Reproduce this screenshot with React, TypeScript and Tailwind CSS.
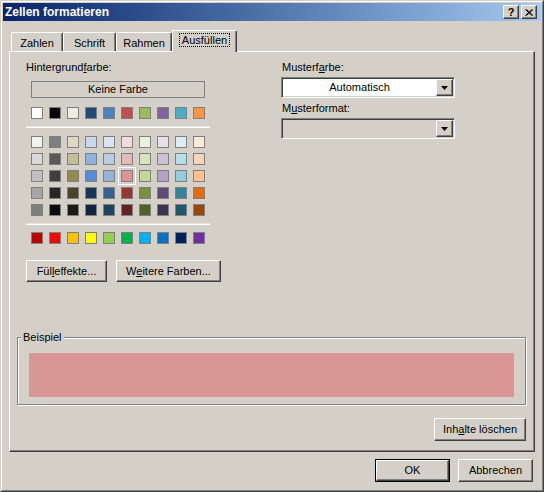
import React from "react";

const theme = ["#FFFFFF", "#000000", "#EEECE1", "#1F497D", "#4F81BD", "#C0504D", "#9BBB59", "#8064A2", "#4BACC6", "#F79646"];

const tints = [
  ["#F2F2F2", "#7F7F7F", "#DDD9C3", "#C6D9F0", "#DBE5F1", "#F2DCDB", "#EBF1DD", "#E5E0EC", "#DBEEF3", "#FDEADA"],
  ["#D8D8D8", "#595959", "#C4BD97", "#8DB3E2", "#B8CCE4", "#E5B9B7", "#D7E3BC", "#CCC1D9", "#B7DDE8", "#FBD5B5"],
  ["#BFBFBF", "#3F3F3F", "#938953", "#548DD4", "#95B3D7", "#D99694", "#C3D69B", "#B2A2C7", "#92CDDC", "#FAC08F"],
  ["#A5A5A5", "#262626", "#494429", "#17365D", "#366092", "#953734", "#76923C", "#5F497A", "#31859B", "#E36C09"],
  ["#7F7F7F", "#0C0C0C", "#1D1B10", "#0F243E", "#244061", "#632423", "#4F6128", "#3F3151", "#205867", "#974806"],
];

const standard = ["#C00000", "#FF0000", "#FFC000", "#FFFF00", "#92D050", "#00B050", "#00B0F0", "#0070C0", "#002060", "#7030A0"];

// windows classic 3d edges
const raised =
  "border border-t-white border-l-white border-r-[#404040] border-b-[#404040] shadow-[inset_-1px_-1px_0_#808080] bg-[#d4d0c8]";
const sunken =
  "border border-t-[#808080] border-l-[#808080] border-r-white border-b-white shadow-[inset_1px_1px_0_#404040,inset_-1px_-1px_0_#d4d0c8]";

function Swatch({ color, selected }: { color: string; selected?: boolean }) {
  return (
    <div
      className={`w-[12px] h-[12px] shrink-0 border border-[#808080] ${
        selected ? "outline outline-1 outline-white outline-offset-2" : ""
      }`}
      style={{ backgroundColor: color }}
    />
  );
}

function SwatchRow({ colors, selected }: { colors: string[]; selected?: number }) {
  return (
    <div className="flex gap-[6px] ml-[5px]">
      {colors.map((c, i) => (
        <Swatch key={i} color={c} selected={i === selected} />
      ))}
    </div>
  );
}

function Arrow() {
  return (
    <svg width="7" height="4" viewBox="0 0 7 4">
      <polygon points="0,0 7,0 3.5,4" fill="#000" />
    </svg>
  );
}

function Combo({ value, disabled }: { value?: string; disabled?: boolean }) {
  return (
    <div className={`mt-[3px] w-[174px] h-[21px] flex p-px ${sunken} ${disabled ? "bg-[#d4d0c8]" : "bg-white"}`}>
      <div className="flex-1 flex items-center justify-center leading-[13px]">{value}</div>
      <div className={`w-[17px] h-[17px] flex items-center justify-center ${raised}`}>
        <Arrow />
      </div>
    </div>
  );
}

function Tab({ label, w }: { label: string; w: string }) {
  return (
    <div
      className={`${w} h-[19px] rounded-t-[2px] border-t border-l border-r border-t-white border-l-white border-r-[#404040] shadow-[inset_-1px_0_0_#808080] flex justify-center pt-[4px] leading-[13px]`}
    >
      {label}
    </div>
  );
}

export default function App() {
  return (
    <div className="w-[544px] h-[492px] bg-[#d4d0c8] border border-t-[#d4d0c8] border-l-[#d4d0c8] border-r-[#404040] border-b-[#404040] font-['Liberation_Sans',Arial,sans-serif] text-[11px] text-black select-none">
      <div className="h-full border border-t-white border-l-white border-r-[#808080] border-b-[#808080] p-px flex flex-col">
        {/* title bar */}
        <div className="h-[18px] flex items-center bg-linear-to-r from-[#0a246a] to-[#a6caf0] pl-[2px] pr-[4px]">
          <div className="flex-1 text-white font-bold text-[12px] leading-[18px]">Zellen formatieren</div>
          <div className={`w-[16px] h-[14px] flex items-center justify-center font-bold text-[11px] leading-[11px] ${raised}`}>
            ?
          </div>
          <div className={`ml-[2px] w-[16px] h-[14px] flex items-center justify-center ${raised}`}>
            <svg width="8" height="7" viewBox="0 0 8 7">
              <path d="M0.5 0.5 L7 6.5 M1.5 0.5 L8 6.5 M7 0.5 L0.5 6.5 M8 0.5 L1.5 6.5" stroke="#000" strokeWidth="1" />
            </svg>
          </div>
        </div>

        <div className="flex-1 flex flex-col px-[6px]">
          {/* tabs */}
          <div className="mt-[9px] h-[21px] flex items-end pl-[2px]">
            <Tab label="Zahlen" w="w-[52px]" />
            <Tab label="Schrift" w="w-[53px]" />
            <Tab label="Rahmen" w="w-[56px]" />
            <div className="relative z-10 -mb-px w-[65px] h-[22px] rounded-t-[2px] bg-[#d4d0c8] border-t border-l border-r border-t-white border-l-white border-r-[#404040] shadow-[inset_-1px_0_0_#808080] flex justify-center pt-[2px]">
              <div className="h-[14px] px-[2px] border border-dotted border-black leading-[12px]">Ausfüllen</div>
            </div>
          </div>

          {/* panel */}
          <div className="h-[401px] flex flex-col border border-t-white border-l-white border-r-[#404040] border-b-[#404040] shadow-[inset_-1px_-1px_0_#808080]">
            <div className="flex pt-[9px] pl-[16px]">
              {/* background colour */}
              <div className="w-[184px] shrink-0 flex flex-col">
                <div className="h-[13px] leading-[13px]">
                  Hintergrund<u>f</u>arbe:
                </div>
                <div className="ml-[5px] mt-[7px] w-[174px] h-[17px] border border-[#808080] flex items-center justify-center leading-[13px]">
                  Keine Farbe
                </div>
                <div className="mt-[9px]">
                  <SwatchRow colors={theme} />
                </div>
                <div className="mt-[7px] h-[2px] border-t border-t-[#e6e3dd] bg-white" />
                <div className="mt-[8px] flex flex-col gap-[5px]">
                  {tints.map((row, i) => (
                    <SwatchRow key={i} colors={row} selected={i === 2 ? 5 : undefined} />
                  ))}
                </div>
                <div className="mt-[7px] h-[2px] border-t border-t-[#e6e3dd] bg-white" />
                <div className="mt-[7px]">
                  <SwatchRow colors={standard} />
                </div>
                <div className="mt-[16px] flex gap-[9px]">
                  <div className={`w-[81px] h-[22px] shrink-0 flex items-center justify-center ${raised}`}>
                    <span>
                      Fül<u>l</u>effekte...
                    </span>
                  </div>
                  <div className={`w-[105px] h-[22px] shrink-0 flex items-center justify-center ${raised}`}>
                    <span>
                      W<u>e</u>itere Farben...
                    </span>
                  </div>
                </div>
              </div>

              {/* pattern */}
              <div className="ml-[71px] flex flex-col">
                <div className="h-[13px] leading-[13px] pl-px">
                  Musterf<u>a</u>rbe:
                </div>
                <Combo value="Automatisch" />
                <div className="mt-[4px] h-[13px] leading-[13px] pl-px">
                  M<u>u</u>sterformat:
                </div>
                <Combo disabled />
              </div>
            </div>

            {/* sample */}
            <div className="relative ml-[7px] mt-[55px] w-[509px] h-[68px] border border-[#808080] shadow-[inset_1px_1px_0_white,1px_1px_0_white] pt-[15px] pl-[11px]">
              <div className="absolute left-[3px] -top-[7px] px-[2px] bg-[#d4d0c8] leading-[13px]">Beispiel</div>
              <div className="w-[485px] h-[44px] bg-[#d99694]" />
            </div>

            <div className="mt-[13px] flex justify-end pr-[8px]">
              <div className={`w-[92px] h-[23px] flex items-center justify-center ${raised}`}>
                <span>
                  Inh<u>a</u>lte löschen
                </span>
              </div>
            </div>
          </div>

          {/* dialog buttons */}
          <div className="mt-[7px] flex justify-end gap-[8px] pr-[2px]">
            <div className="w-[75px] h-[23px] border border-black">
              <div className={`w-full h-full flex items-center justify-center ${raised}`}>OK</div>
            </div>
            <div className={`w-[75px] h-[23px] flex items-center justify-center ${raised}`}>Abbrechen</div>
          </div>
        </div>
      </div>
    </div>
  );
}
